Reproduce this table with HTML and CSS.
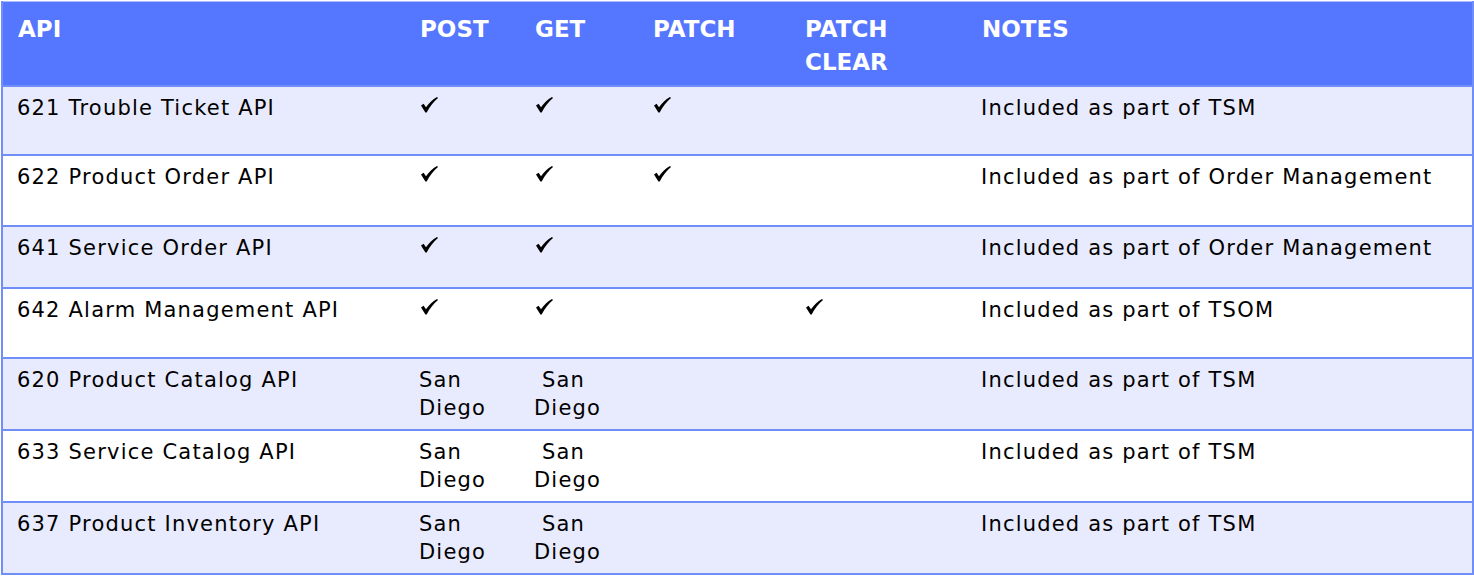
FILE: index.html
```html
<!DOCTYPE html>
<html>
<head>
<meta charset="utf-8">
<link rel="stylesheet" href="styles.css">
</head>
<body>
<table class="api-table">
  <colgroup>
    <col class="c-api">
    <col class="c-post">
    <col class="c-get">
    <col class="c-patch">
    <col class="c-clear">
    <col class="c-notes">
  </colgroup>
  <thead>
    <tr class="head">
      <th>API</th>
      <th>POST</th>
      <th>GET</th>
      <th>PATCH</th>
      <th>PATCH<br>CLEAR</th>
      <th>NOTES</th>
    </tr>
  </thead>
  <tbody>
    <tr class="shade h69">
      <td>621 Trouble Ticket API</td>
      <td class="chk"><svg class="tick" viewBox="0 0 17 16"><path d="M0 8.5 L2.6 6.8 L5 10.3 C8 6 11.5 2.6 16 0 L17 1 C12.6 4.6 8.6 9.6 5.7 15.6 L4.4 15.6 Z"/></svg></td>
      <td class="chk"><svg class="tick" viewBox="0 0 17 16"><path d="M0 8.5 L2.6 6.8 L5 10.3 C8 6 11.5 2.6 16 0 L17 1 C12.6 4.6 8.6 9.6 5.7 15.6 L4.4 15.6 Z"/></svg></td>
      <td class="chk"><svg class="tick" viewBox="0 0 17 16"><path d="M0 8.5 L2.6 6.8 L5 10.3 C8 6 11.5 2.6 16 0 L17 1 C12.6 4.6 8.6 9.6 5.7 15.6 L4.4 15.6 Z"/></svg></td>
      <td></td>
      <td>Included as part of TSM</td>
    </tr>
    <tr class="h71">
      <td>622 Product Order API</td>
      <td class="chk"><svg class="tick" viewBox="0 0 17 16"><path d="M0 8.5 L2.6 6.8 L5 10.3 C8 6 11.5 2.6 16 0 L17 1 C12.6 4.6 8.6 9.6 5.7 15.6 L4.4 15.6 Z"/></svg></td>
      <td class="chk"><svg class="tick" viewBox="0 0 17 16"><path d="M0 8.5 L2.6 6.8 L5 10.3 C8 6 11.5 2.6 16 0 L17 1 C12.6 4.6 8.6 9.6 5.7 15.6 L4.4 15.6 Z"/></svg></td>
      <td class="chk"><svg class="tick" viewBox="0 0 17 16"><path d="M0 8.5 L2.6 6.8 L5 10.3 C8 6 11.5 2.6 16 0 L17 1 C12.6 4.6 8.6 9.6 5.7 15.6 L4.4 15.6 Z"/></svg></td>
      <td></td>
      <td>Included as part of Order Management</td>
    </tr>
    <tr class="shade h62">
      <td>641 Service Order API</td>
      <td class="chk"><svg class="tick" viewBox="0 0 17 16"><path d="M0 8.5 L2.6 6.8 L5 10.3 C8 6 11.5 2.6 16 0 L17 1 C12.6 4.6 8.6 9.6 5.7 15.6 L4.4 15.6 Z"/></svg></td>
      <td class="chk"><svg class="tick" viewBox="0 0 17 16"><path d="M0 8.5 L2.6 6.8 L5 10.3 C8 6 11.5 2.6 16 0 L17 1 C12.6 4.6 8.6 9.6 5.7 15.6 L4.4 15.6 Z"/></svg></td>
      <td></td>
      <td></td>
      <td>Included as part of Order Management</td>
    </tr>
    <tr class="h70">
      <td>642 Alarm Management API</td>
      <td class="chk"><svg class="tick" viewBox="0 0 17 16"><path d="M0 8.5 L2.6 6.8 L5 10.3 C8 6 11.5 2.6 16 0 L17 1 C12.6 4.6 8.6 9.6 5.7 15.6 L4.4 15.6 Z"/></svg></td>
      <td class="chk"><svg class="tick" viewBox="0 0 17 16"><path d="M0 8.5 L2.6 6.8 L5 10.3 C8 6 11.5 2.6 16 0 L17 1 C12.6 4.6 8.6 9.6 5.7 15.6 L4.4 15.6 Z"/></svg></td>
      <td></td>
      <td class="chk"><svg class="tick" viewBox="0 0 17 16"><path d="M0 8.5 L2.6 6.8 L5 10.3 C8 6 11.5 2.6 16 0 L17 1 C12.6 4.6 8.6 9.6 5.7 15.6 L4.4 15.6 Z"/></svg></td>
      <td>Included as part of TSOM</td>
    </tr>
    <tr class="shade h72">
      <td>620 Product Catalog API</td>
      <td>San<br>Diego</td>
      <td>&nbsp;San<br>Diego</td>
      <td></td>
      <td></td>
      <td>Included as part of TSM</td>
    </tr>
    <tr class="h72">
      <td>633 Service Catalog API</td>
      <td>San<br>Diego</td>
      <td>&nbsp;San<br>Diego</td>
      <td></td>
      <td></td>
      <td>Included as part of TSM</td>
    </tr>
    <tr class="shade h72">
      <td>637 Product Inventory API</td>
      <td>San<br>Diego</td>
      <td>&nbsp;San<br>Diego</td>
      <td></td>
      <td></td>
      <td>Included as part of TSM</td>
    </tr>
  </tbody>
</table>
</body>
</html>
```
FILE: styles.css
```css
html, body {
  margin: 0;
  padding: 0;
  background: #ffffff;
}
body {
  padding: 1px 0 0 1px;
}
.api-table {
  border-collapse: collapse;
  table-layout: fixed;
  width: 1471px;
  font-family: "DejaVu Sans", sans-serif;
  color: #000;
  border-left: 2px solid #6f8ef7;
  border-right: 2px solid #6f8ef7;
  border-bottom: 2px solid #6f8ef7;
  border-top: 1px solid #a9bbf9;
}
.c-api { width: 403px; }
.c-post { width: 115px; }
.c-get { width: 118px; }
.c-patch { width: 152px; }
.c-clear { width: 177px; }
.c-notes { width: 506px; }

.head {
  background: #5576ff;
  height: 84px;
}
.head th {
  color: #fff;
  font-weight: bold;
  font-size: 23px;
  line-height: 33px;
  text-align: left;
  vertical-align: top;
  padding: 11px 0 0 15px;
}
tbody tr {
  border-top: 2px solid #6f8ef7;
}
tbody td {
  font-size: 21px;
  letter-spacing: 1.2px;
  line-height: 28px;
  vertical-align: top;
  padding: 7px 0 0 14px;
  white-space: nowrap;
}
.shade { background: #e8ebfd; }
.h69 { height: 69px; }
.h71 { height: 71px; }
.h62 { height: 62px; }
.h70 { height: 70px; }
.h72 { height: 72px; }
.chk {
  padding-top: 10px;
  padding-left: 16px;
  line-height: 16px;
}
.tick {
  display: block;
  width: 17px;
  height: 16px;
  fill: #000;
}
```
